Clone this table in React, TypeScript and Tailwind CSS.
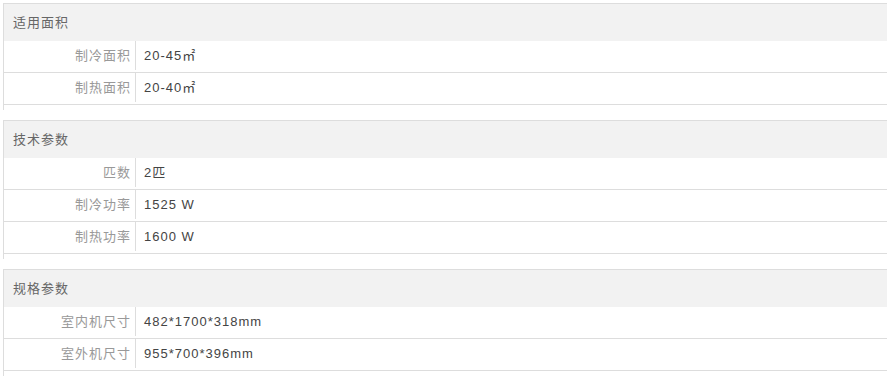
type Row = { label: string; value: string };
type Section = { title: string; rows: Row[] };

const sections: Section[] = [
  {
    title: '适用面积',
    rows: [
      { label: '制冷面积', value: '20-45㎡' },
      { label: '制热面积', value: '20-40㎡' },
    ],
  },
  {
    title: '技术参数',
    rows: [
      { label: '匹数', value: '2匹' },
      { label: '制冷功率', value: '1525 W' },
      { label: '制热功率', value: '1600 W' },
    ],
  },
  {
    title: '规格参数',
    rows: [
      { label: '室内机尺寸', value: '482*1700*318mm' },
      { label: '室外机尺寸', value: '955*700*396mm' },
    ],
  },
];

// Spec sheet: grey section headers, label | value rows.
export default function App() {
  return (
    <div className="min-h-screen bg-white pl-[3px] pt-[3px] font-['Liberation_Sans','Noto_Sans_CJK_SC',sans-serif] text-[13px] tracking-[1px]">
      <div className="w-[884px]">
        {sections.map((s) => (
          <div key={s.title} className="mb-[10px] border-l border-t border-[#dddddd] pb-[5px]">
            <div className="flex h-[37px] items-center bg-[#f2f2f2] pl-[9px] text-[#666666]">
              {s.title}
            </div>
            {s.rows.map((r) => (
              <div key={r.label} className="flex h-[32px] border-b border-[#dddddd]">
                <div className="h-[29px] w-[132px] shrink-0 border-r border-[#dddddd] pr-[4px] text-right leading-[29px] text-[#999999]">
                  {r.label}
                </div>
                <div className="h-[29px] pl-[8px] leading-[29px] text-[#444444]">{r.value}</div>
              </div>
            ))}
          </div>
        ))}
      </div>
    </div>
  );
}
